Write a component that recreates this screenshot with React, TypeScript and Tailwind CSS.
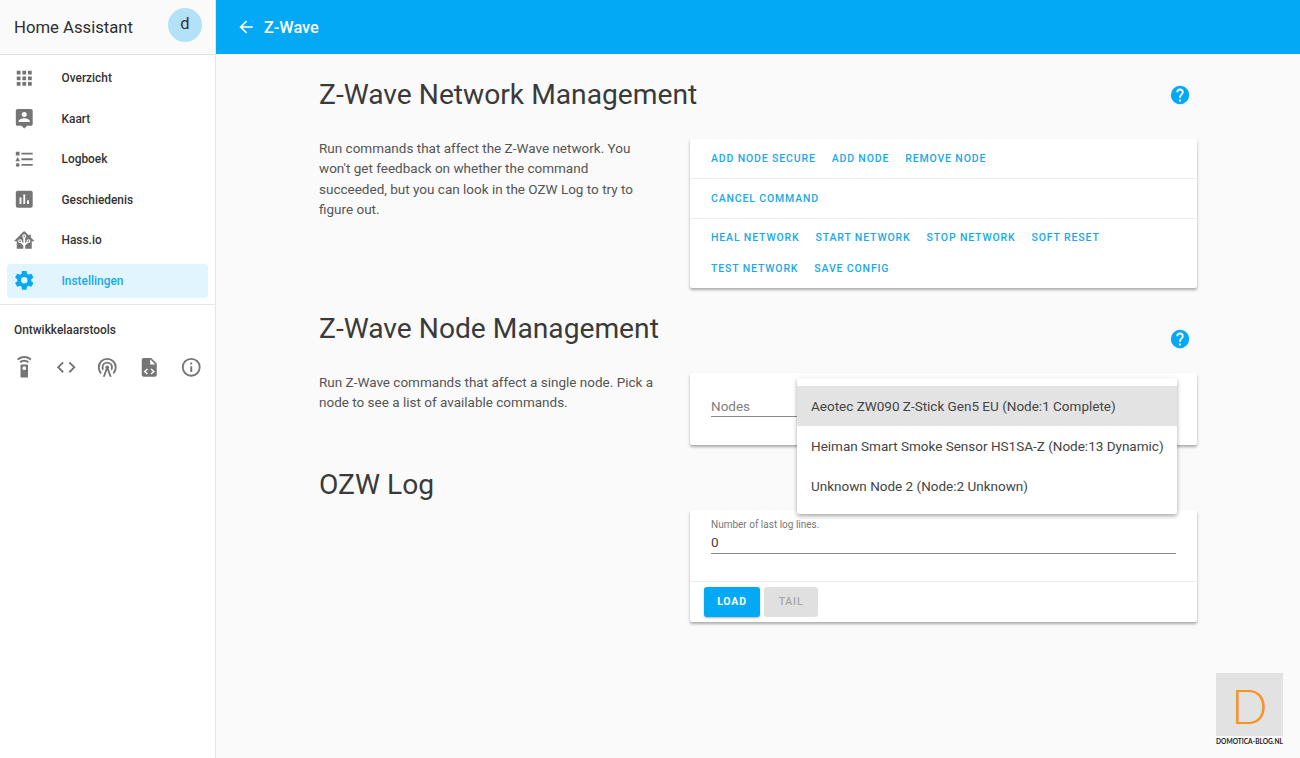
import type { ReactNode } from "react"

const navItems = [
  { label: "Overzicht", d: "M16,20H20V16H16M16,14H20V10H16M10,8H14V4H10M16,8H20V4H16M10,14H14V10H10M4,14H8V10H4M4,20H8V16H4M10,20H14V16H10M4,8H8V4H4V8Z" },
  { label: "Kaart", d: "M18,16H6V15.1C6,13.1 10,12 12,12C14,12 18,13.1 18,15.1M12,5.3C13.5,5.3 14.7,6.5 14.7,8C14.7,9.5 13.5,10.7 12,10.7C10.5,10.7 9.3,9.5 9.3,8C9.3,6.5 10.5,5.3 12,5.3M19,2H5C3.89,2 3,2.89 3,4V18A2,2 0 0,0 5,20H9L12,23L15,20H19A2,2 0 0,0 21,18V4C21,2.89 20.1,2 19,2Z" },
  { label: "Logboek", d: "M5,9.5L7.5,14H2.5L5,9.5M3,4H7V8H3V4M5,20A2,2 0 0,0 7,18A2,2 0 0,0 5,16A2,2 0 0,0 3,18A2,2 0 0,0 5,20M9,5V7H21V5H9M9,19H21V17H9V19M9,13H21V11H9V13Z" },
  { label: "Geschiedenis", d: "M17,17H15V13H17M13,17H11V7H13M9,17H7V10H9M19,3H5C3.89,3 3,3.89 3,5V19A2,2 0 0,0 5,21H19A2,2 0 0,0 21,19V5C21,3.89 20.1,3 19,3Z" },
  { label: "Hass.io", d: "M21.8,13H20V21H13V17.67L15.79,14.88L16.5,15C17.66,15 18.6,14.06 18.6,12.9C18.6,11.74 17.66,10.8 16.5,10.8A2.1,2.1 0 0,0 14.4,12.9L14.5,13.61L13,15.13V9.65C13.66,9.29 14.1,8.6 14.1,7.8A2.1,2.1 0 0,0 12,5.7A2.1,2.1 0 0,0 9.9,7.8C9.9,8.6 10.34,9.29 11,9.65V15.13L9.5,13.61L9.6,12.9A2.1,2.1 0 0,0 7.5,10.8A2.1,2.1 0 0,0 5.4,12.9A2.1,2.1 0 0,0 7.5,15L8.21,14.88L11,17.67V21H4V13H2.25C1.83,13 1.42,13 1.42,12.79C1.43,12.57 1.85,12.15 2.28,11.72L11,3C11.33,2.67 11.67,2.33 12,2.33C12.33,2.33 12.67,2.67 13,3L17,7V6H19V9L21.78,11.78C22.18,12.18 22.59,12.59 22.6,12.8C22.6,13 22.2,13 21.8,13M7.5,12A0.9,0.9 0 0,1 8.4,12.9A0.9,0.9 0 0,1 7.5,13.8A0.9,0.9 0 0,1 6.6,12.9A0.9,0.9 0 0,1 7.5,12M16.5,12C17,12 17.4,12.4 17.4,12.9C17.4,13.4 17,13.8 16.5,13.8A0.9,0.9 0 0,1 15.6,12.9A0.9,0.9 0 0,1 16.5,12M12,6.9C12.5,6.9 12.9,7.3 12.9,7.8C12.9,8.3 12.5,8.7 12,8.7C11.5,8.7 11.1,8.3 11.1,7.8C11.1,7.3 11.5,6.9 12,6.9Z" },
]

const settingsPath =
  "M12,15.5A3.5,3.5 0 0,1 8.5,12A3.5,3.5 0 0,1 12,8.5A3.5,3.5 0 0,1 15.5,12A3.5,3.5 0 0,1 12,15.5M19.43,12.97C19.47,12.65 19.5,12.33 19.5,12C19.5,11.67 19.47,11.34 19.43,11L21.54,9.37C21.73,9.22 21.78,8.95 21.66,8.73L19.66,5.27C19.54,5.05 19.27,4.96 19.05,5.05L16.56,6.05C16.04,5.66 15.5,5.32 14.87,5.07L14.5,2.42C14.46,2.18 14.25,2 14,2H10C9.75,2 9.54,2.18 9.5,2.42L9.13,5.07C8.5,5.32 7.96,5.66 7.44,6.05L4.95,5.05C4.73,4.96 4.46,5.05 4.34,5.27L2.34,8.73C2.21,8.95 2.27,9.22 2.46,9.37L4.57,11C4.53,11.34 4.5,11.67 4.5,12C4.5,12.33 4.53,12.65 4.57,12.97L2.46,14.63C2.27,14.78 2.21,15.05 2.34,15.27L4.34,18.73C4.46,18.95 4.73,19.03 4.95,18.95L7.44,17.94C7.96,18.34 8.5,18.68 9.13,18.93L9.5,21.58C9.54,21.82 9.75,22 10,22H14C14.25,22 14.46,21.82 14.5,21.58L14.87,18.93C15.5,18.67 16.04,18.34 16.56,17.94L19.05,18.95C19.27,19.03 19.54,18.95 19.66,18.73L21.66,15.27C21.78,15.05 21.73,14.78 21.54,14.63L19.43,12.97Z"

const devIcons = [
  "M12,0C8.96,0 6.21,1.23 4.22,3.22L5.63,4.63C7.26,3 9.5,2 12,2C14.5,2 16.74,3 18.36,4.64L19.77,3.23C17.79,1.23 15.04,0 12,0M7.05,6.05L8.46,7.46C9.37,6.56 10.62,6 12,6C13.38,6 14.63,6.56 15.54,7.46L16.95,6.05C15.68,4.78 13.93,4 12,4C10.07,4 8.32,4.78 7.05,6.05M12,15A2,2 0 0,1 10,13A2,2 0 0,1 12,11A2,2 0 0,1 14,13A2,2 0 0,1 12,15M15,9H9A1,1 0 0,0 8,10V22A1,1 0 0,0 9,23H15A1,1 0 0,0 16,22V10A1,1 0 0,0 15,9Z",
  "M14.6,16.6L19.2,12L14.6,7.4L16,6L22,12L16,18L14.6,16.6M9.4,16.6L4.8,12L9.4,7.4L8,6L2,12L8,18L9.4,16.6Z",
  "M12,10A2,2 0 0,1 14,12C14,12.5 13.82,12.94 13.53,13.29L16.7,22H14.57L12,14.93L9.43,22H7.3L10.47,13.29C10.18,12.94 10,12.5 10,12A2,2 0 0,1 12,10M12,8A4,4 0 0,0 8,12C8,12.5 8.1,13 8.28,13.46L7.4,15.86C6.53,14.81 6,13.47 6,12A6,6 0 0,1 12,6A6,6 0 0,1 18,12C18,13.47 17.47,14.81 16.6,15.86L15.72,13.46C15.9,13 16,12.5 16,12A4,4 0 0,0 12,8M12,4A8,8 0 0,0 4,12C4,14 4.73,15.82 5.95,17.22L5.1,19.5C3.18,17.7 2,15 2,12A10,10 0 0,1 12,2A10,10 0 0,1 22,12C22,15 20.82,17.7 18.9,19.5L18.05,17.22C19.27,15.82 20,14 20,12A8,8 0 0,0 12,4Z",
  "M14,2H6C4.89,2 4,2.89 4,4V20C4,21.11 4.89,22 6,22H18C19.11,22 20,21.11 20,20V8L14,2M13,9V3.5L18.5,9H13M10.6,14.4L8.2,16.5L10.6,18.6L9.6,19.7L6,16.5L9.6,13.3L10.6,14.4M13.4,14.4L14.4,13.3L18,16.5L14.4,19.7L13.4,18.6L15.8,16.5L13.4,14.4Z",
  "M11,9H13V7H11M12,20C7.59,20 4,16.41 4,12C4,7.59 7.59,4 12,4C16.41,4 20,7.59 20,12C20,16.41 16.41,20 12,20M12,2A10,10 0 0,0 2,12A10,10 0 0,0 12,22A10,10 0 0,0 22,12A10,10 0 0,0 12,2M11,17H13V11H11V17Z",
]

const helpPath =
  "M15.07,11.25L14.17,12.17C13.45,12.89 13,13.5 13,15H11V14.5C11,13.39 11.45,12.39 12.17,11.67L13.41,10.41C13.78,10.05 14,9.55 14,9C14,7.89 13.1,7 12,7A2,2 0 0,0 10,9H8A4,4 0 0,1 12,5A4,4 0 0,1 16,9C16,9.88 15.64,10.67 15.07,11.25M13,19H11V17H13M12,2A10,10 0 0,0 2,12C2,17.5 6.5,22 12,22A10,10 0 0,0 22,12C22,6.47 17.5,2 12,2Z"

function Icon({ d, className }: { d: string; className: string }) {
  return (
    <svg viewBox="0 0 24 24" fill="currentColor" fillRule="evenodd" className={className} aria-hidden>
      <path d={d} />
    </svg>
  )
}

function Heading({ children }: { children: ReactNode }) {
  return <h2 className="h-[38px] text-[28.2px] font-normal leading-[38px] text-[#3a3a3a]">{children}</h2>
}

function Action({ children }: { children: ReactNode }) {
  return <span className="text-[10.5px] font-medium uppercase leading-none tracking-[0.85px] text-[#1aa9e8]">{children}</span>
}

function Help({ className }: { className: string }) {
  return <Icon d={helpPath} className={`h-[22px] w-[22px] text-[#03a9f4] ${className}`} />
}

const cardClass = "w-[507px] rounded-[2px] bg-white shadow-[0_2px_3px_rgba(0,0,0,0.32)]"

export default function App() {
  return (
    <div className="flex h-[758px] w-[1300px] overflow-hidden bg-[#fafafa] font-['Roboto',sans-serif] text-[#212121]">
      {/* Sidebar */}
      <aside className="flex w-[216px] shrink-0 flex-col border-r border-[#e6e6e6] bg-white">
        <div className="flex h-[55px] shrink-0 items-center justify-between border-b border-[#e2e2e2] bg-[#fafafa] pl-[14px] pr-[13px]">
          <span className="pt-[2px] text-[16.7px] text-[#2f2f2f]">Home Assistant</span>
          <span className="mb-[4px] flex h-[34px] w-[34px] items-center justify-center rounded-full bg-[#b3e1f8] pb-[1px] text-[16.5px] text-[#333]">d</span>
        </div>
        <nav className="flex flex-col gap-[6.5px] px-[7px] pt-[6px]">
          {navItems.map((item) => (
            <div key={item.label} className="flex h-[34px] items-center rounded-[4px] pl-[6px]">
              <Icon d={item.d} className="h-[22.5px] w-[22.5px] shrink-0 text-[#757575]" />
              <span className="ml-[26px] pt-[2px] text-[11.9px] font-medium text-[#333]">{item.label}</span>
            </div>
          ))}
          <div className="flex h-[34px] items-center rounded-[4px] bg-[#e1f5fe] pl-[6px]">
            <Icon d={settingsPath} className="h-[22.5px] w-[22.5px] shrink-0 text-[#03a9f4]" />
            <span className="ml-[26px] pt-[2px] text-[11.9px] font-medium text-[#1aa9e8]">Instellingen</span>
          </div>
        </nav>
        <div className="mt-[6px] border-t border-[#e6e6e6] pl-[13px] pt-[18px]">
          <p className="pl-[1px] text-[11.9px] font-medium leading-[15px] text-[#333]">Ontwikkelaarstools</p>
          <div className="mt-[18px] flex w-[189px] justify-between">
            {devIcons.map((d) => (
              <Icon key={d} d={d} className="h-[22.5px] w-[22.5px] text-[#757575]" />
            ))}
          </div>
        </div>
      </aside>

      {/* Main */}
      <div className="flex min-w-0 flex-1 flex-col">
        <header className="flex h-[54px] shrink-0 items-center bg-[#03a9f4] pl-[20px] text-white">
          <Icon d="M20,11V13H8L13.5,18.5L12.08,19.92L4.16,12L12.08,4.08L13.5,5.5L8,11H20Z" className="h-[20px] w-[20px]" />
          <span className="ml-[8px] pt-[2px] text-[16.3px] font-medium">Z-Wave</span>
        </header>

        <main className="relative flex-1 pl-[103px] pt-[21px]">
          {/* Network management */}
          <section className="w-[878px]">
            <div className="flex h-[38px] items-start justify-between pr-[6px] pt-[1px]">
              <Heading>Z-Wave Network Management</Heading>
              <Help className="mt-[8px]" />
            </div>
            <div className="mt-[26px] flex">
              <p className="-mt-[1px] w-[371px] pr-[34px] text-[13.5px] leading-[20.3px] text-[#555]">
                Run commands that affect the Z-Wave network. You won't get feedback on whether the command succeeded, but you can look in the OZW Log to try to figure out.
              </p>
              <div className={cardClass}>
                <div className="flex h-[40px] items-center gap-[16px] border-b border-[#eeeeee] pl-[21px] pt-[1px]">
                  <Action>Add Node Secure</Action>
                  <Action>Add Node</Action>
                  <Action>Remove Node</Action>
                </div>
                <div className="flex h-[40px] items-center gap-[16px] border-b border-[#eeeeee] pl-[21px] pt-[1px]">
                  <Action>Cancel Command</Action>
                </div>
                <div className="flex h-[69px] flex-col gap-[20px] pl-[21px] pt-[14px]">
                  <div className="flex gap-[16px]">
                    <Action>Heal Network</Action>
                    <Action>Start Network</Action>
                    <Action>Stop Network</Action>
                    <Action>Soft Reset</Action>
                  </div>
                  <div className="flex gap-[16px]">
                    <Action>Test Network</Action>
                    <Action>Save Config</Action>
                  </div>
                </div>
              </div>
            </div>
          </section>

          {/* Node management */}
          <section className="mt-[21px] w-[878px]">
            <div className="flex h-[38px] items-start justify-between pr-[6px] pt-[1px]">
              <Heading>Z-Wave Node Management</Heading>
              <Help className="mt-[18px]" />
            </div>
            <div className="mt-[26px] flex">
              <p className="-mt-[1px] w-[371px] pr-[34px] text-[13.5px] leading-[20.3px] text-[#555]">
                Run Z-Wave commands that affect a single node. Pick a node to see a list of available commands.
              </p>
              <div className={`${cardClass} relative h-[72px] px-[21px] pt-[21px]`}>
                <div className="h-[23px] w-[120px] border-b border-[#8a8a8a] pt-[2px] text-[13.5px] leading-[20px] text-[#808080]">Nodes</div>
                {/* Open dropdown */}
                <div className="absolute left-[107px] top-[5px] z-10 w-[380px] rounded-[2px] bg-white py-[8px] text-[13.5px] text-[#444] shadow-[0_2px_4px_rgba(0,0,0,0.35)]">
                  <div className="flex h-[40px] items-center bg-[#e3e3e3] pl-[14px]">Aeotec ZW090 Z-Stick Gen5 EU (Node:1 Complete)</div>
                  <div className="flex h-[40px] items-center pl-[14px]">Heiman Smart Smoke Sensor HS1SA-Z (Node:13 Dynamic)</div>
                  <div className="flex h-[40px] items-center pl-[14px]">Unknown Node 2 (Node:2 Unknown)</div>
                </div>
              </div>
            </div>
          </section>

          {/* OZW log */}
          <section className="mt-[20px] flex w-[878px]">
            <div className="w-[371px] pt-[1px]">
              <Heading>OZW Log</Heading>
            </div>
            <div className={`${cardClass} mt-[45px]`}>
              <div className="h-[72px] border-b border-[#eeeeee] px-[21px] pt-[9px]">
                <p className="text-[10px] leading-[12px] text-[#777]">Number of last log lines.</p>
                <div className="mt-[1px] h-[22px] border-b border-[#8a8a8a] text-[13.5px] leading-[20px] text-[#444]">0</div>
              </div>
              <div className="flex h-[40px] items-center gap-[4px] pl-[14px]">
                <button className="flex h-[30px] w-[56px] items-center justify-center rounded-[3px] bg-[#03a9f4] text-[10.5px] font-bold tracking-[0.8px] text-white shadow-[0_1px_2px_rgba(0,0,0,0.3)]">LOAD</button>
                <button className="flex h-[30px] w-[54px] items-center justify-center rounded-[3px] bg-[#e0e0e0] text-[10.5px] font-medium tracking-[0.8px] text-[#a8a8a8]">TAIL</button>
              </div>
            </div>
          </section>

          {/* Blog watermark */}
          <div className="absolute left-[1000px] top-[619px] w-[67px]">
            <div className="flex h-[63px] items-center justify-center bg-[#e2e2e2] pt-[2px] font-['Lato',sans-serif] text-[48px] font-light leading-none text-[#f7941d]">D</div>
            <p className="whitespace-nowrap text-center font-['Lato',sans-serif] text-[6.6px] font-bold leading-[10px] text-[#222]">DOMOTICA-BLOG.NL</p>
          </div>
        </main>
      </div>
    </div>
  )
}
